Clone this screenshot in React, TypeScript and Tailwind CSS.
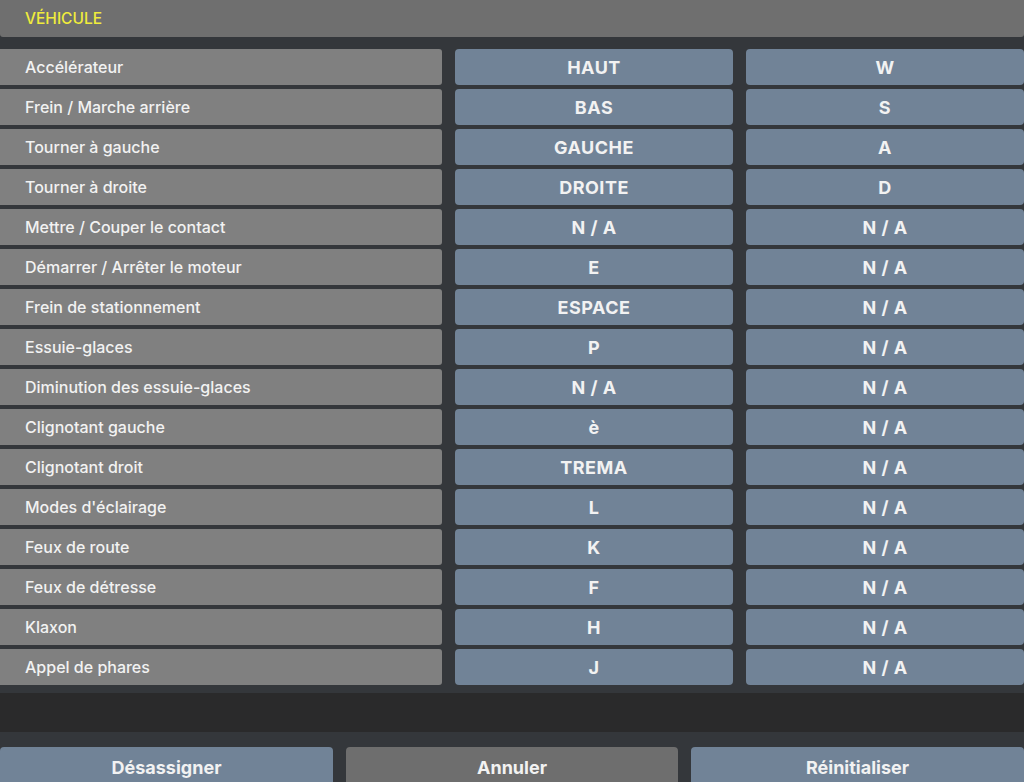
const rows: [string, string, string][] = [
  ['Accélérateur', 'HAUT', 'W'],
  ['Frein / Marche arrière', 'BAS', 'S'],
  ['Tourner à gauche', 'GAUCHE', 'A'],
  ['Tourner à droite', 'DROITE', 'D'],
  ['Mettre / Couper le contact', 'N / A', 'N / A'],
  ['Démarrer / Arrêter le moteur', 'E', 'N / A'],
  ['Frein de stationnement', 'ESPACE', 'N / A'],
  ['Essuie-glaces', 'P', 'N / A'],
  ['Diminution des essuie-glaces', 'N / A', 'N / A'],
  ['Clignotant gauche', 'è', 'N / A'],
  ['Clignotant droit', 'TREMA', 'N / A'],
  ["Modes d'éclairage", 'L', 'N / A'],
  ['Feux de route', 'K', 'N / A'],
  ['Feux de détresse', 'F', 'N / A'],
  ['Klaxon', 'H', 'N / A'],
  ['Appel de phares', 'J', 'N / A'],
];

export default function App() {
  return (
    <div className="h-[782px] w-[1024px] overflow-hidden bg-[#34373b] font-['Inter','Liberation_Sans',sans-serif] text-[#f2f2f2]">
      <div className="flex h-[37px] items-center rounded-b-[3px] bg-[#6f6f6f] px-[25px] text-[15.5px] font-medium text-[#f0ec3c]">
        VÉHICULE
      </div>
      <div className="mt-[12px] flex flex-col gap-[4px]">
        {rows.map(([label, k1, k2]) => (
          <div key={label} className="grid h-[36px] grid-cols-[442px_278px_278px] gap-[13px]">
            <div className="flex items-center rounded-r-[3px] bg-[#808080] pl-[25px] text-[16px] font-medium">{label}</div>
            <KeyCell value={k1} />
            <KeyCell value={k2} />
          </div>
        ))}
      </div>
      <div className="mt-[8px] h-[39px] bg-[#2a2a2b]" />
      <div className="mt-[15px] grid grid-cols-[333px_332px_333px] gap-[13px]">
        <Button label="Désassigner" tone="blue" />
        <Button label="Annuler" tone="grey" />
        <Button label="Réinitialiser" tone="blue" />
      </div>
    </div>
  );
}

function KeyCell({ value }: { value: string }) {
  return (
    <div className="flex items-center justify-center rounded-[4px] bg-[#718397] text-[18px] font-bold tracking-[0.5px]">
      {value}
    </div>
  );
}

function Button({ label, tone }: { label: string; tone: 'blue' | 'grey' }) {
  return (
    <div
      className={`flex h-[40px] items-center justify-center rounded-t-[4px] text-[18px] font-bold ${
        tone === 'blue' ? 'bg-[#718397]' : 'bg-[#6e6e6e]'
      }`}
    >
      {label}
    </div>
  );
}
